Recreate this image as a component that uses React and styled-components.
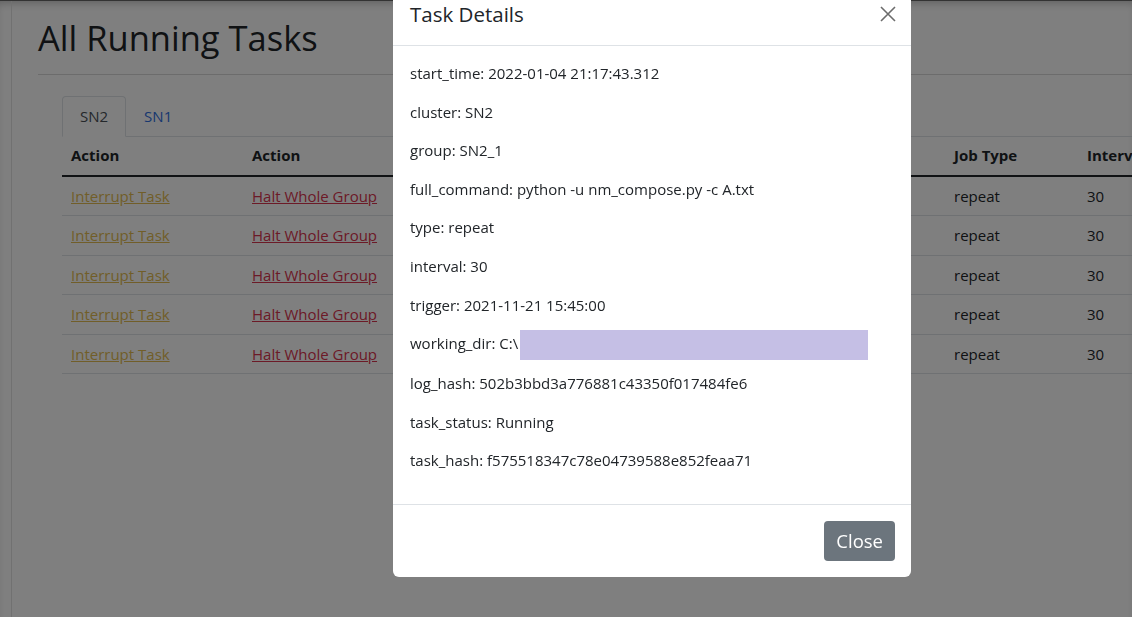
import React from "react";
import styled, { createGlobalStyle } from "styled-components";

const GlobalStyle = createGlobalStyle`
  html, body {
    margin: 0;
    padding: 0;
    overflow: hidden;
    background: #fff;
  }
  body {
    font-family: "Open Sans", "Noto Sans", sans-serif;
    font-size: 15px;
    color: #212529;
  }
`;

const Page = styled.div`
  display: flex;
  min-height: 617px;
  border-top: 1px solid #666;
  box-shadow: inset 0 6px 8px -4px rgba(0, 0, 0, 0.25);
`;

const Gutter = styled.div`
  flex: 0 0 11px;
`;

const Main = styled.main`
  flex: 1;
  border-left: 1px solid #e2e2e2;
  padding: 11px 0 0 26px;
  min-width: 1200px;
`;

const Title = styled.h1`
  margin: 0;
  font-size: 34.5px;
  line-height: 52px;
  font-weight: 400;
  color: #212529;
`;

const Rule = styled.hr`
  margin: 10px 0 21px;
  border: 0;
  border-top: 1px solid #d8d8d8;
`;

const Content = styled.div`
  padding-left: 24px;
`;

const Tabs = styled.ul`
  display: flex;
  list-style: none;
  margin: 0;
  padding: 0;
  border-bottom: 1px solid #dee2e6;
`;

const Tab = styled.li`
  margin-bottom: -1px;
  padding: 8px 17px;
  line-height: 23px;
  border: 1px solid ${(p) => (p.$active ? "#dee2e6" : "transparent")};
  border-bottom-color: ${(p) => (p.$active ? "#fff" : "transparent")};
  border-radius: 4px 4px 0 0;
  background: ${(p) => (p.$active ? "#fff" : "transparent")};
  color: ${(p) => (p.$active ? "#495057" : "#2f6fdf")};
`;

const Table = styled.table`
  border-collapse: collapse;
  table-layout: fixed;
  width: 1136px;
`;

const Th = styled.th`
  text-align: left;
  font-weight: 700;
  padding: 7px 9px 8px;
  line-height: 22.5px;
  border-bottom: 2px solid #212529;
  white-space: nowrap;
  overflow: hidden;
`;

const Td = styled.td`
  padding: 8px 9px;
  line-height: 22.5px;
  border-bottom: 1px solid #dee2e6;
  white-space: nowrap;
  overflow: hidden;
`;

const ActionLink = styled.a`
  color: ${(p) => (p.$tone === "danger" ? "#d9344e" : "#e3bc52")};
  text-decoration: underline;
  cursor: pointer;
`;

const Backdrop = styled.div`
  position: fixed;
  inset: 0;
  background: rgba(0, 0, 0, 0.5);
`;

const Modal = styled.div`
  position: fixed;
  left: 393px;
  top: -17px;
  width: 518px;
  background: #fff;
  border-radius: 6px;
  display: flex;
  flex-direction: column;
`;

const ModalHeader = styled.div`
  display: flex;
  align-items: center;
  justify-content: space-between;
  padding: 16px 15px 16px 17px;
  border-bottom: 1px solid #dee2e6;
`;

const ModalTitle = styled.h5`
  margin: 0;
  font-size: 20.5px;
  line-height: 30px;
  font-weight: 400;
`;

const CloseX = styled.button`
  border: 0;
  background: none;
  padding: 0;
  width: 16px;
  height: 16px;
  display: flex;
  color: #6c6c6c;
`;

const ModalBody = styled.div`
  padding: 16px 17px;
`;

const Field = styled.p`
  margin: 0 0 16px;
  line-height: 22.6px;
  white-space: nowrap;
`;

const Redacted = styled.span`
  display: inline-block;
  width: 348px;
  height: 30px;
  margin: -4px 0 -4px 2px;
  vertical-align: middle;
  background: #c5bfe5;
`;

const ModalFooter = styled.div`
  display: flex;
  justify-content: flex-end;
  padding: 16px;
  border-top: 1px solid #dee2e6;
`;

const Button = styled.button`
  height: 40px;
  padding: 0 12px;
  border: 0;
  border-radius: 4px;
  background: #6c757d;
  color: #fff;
  font-family: inherit;
  font-size: 18.5px;
`;

const rows = Array.from({ length: 5 }, (_, i) => ({
  name: `task_${i + 1}`,
  command: "python -u nm_compose.py -c A.txt",
  type: "repeat",
  interval: 30,
}));

const details = [
  ["start_time", "2022-01-04 21:17:43.312"],
  ["cluster", "SN2"],
  ["group", "SN2_1"],
  ["full_command", "python -u nm_compose.py -c A.txt"],
  ["type", "repeat"],
  ["interval", "30"],
  ["trigger", "2021-11-21 15:45:00"],
  ["working_dir", "C:\\", true],
  ["log_hash", "502b3bbd3a776881c43350f017484fe6"],
  ["task_status", "Running"],
  ["task_hash", "f575518347c78e04739588e852feaa71"],
];

export default function App() {
  return (
    <>
      <GlobalStyle />
      <Page>
        <Gutter />
        <Main>
          <Title>All Running Tasks</Title>
          <Rule />
          <Content>
            <Tabs>
              <Tab $active>SN2</Tab>
              <Tab>SN1</Tab>
            </Tabs>
            <Table>
              <colgroup>
                <col style={{ width: 181 }} />
                <col style={{ width: 200 }} />
                <col style={{ width: 120 }} />
                <col style={{ width: 382 }} />
                <col style={{ width: 133 }} />
                <col style={{ width: 120 }} />
              </colgroup>
              <thead>
                <tr>
                  <Th>Action</Th>
                  <Th>Action</Th>
                  <Th>Task Name</Th>
                  <Th>Command</Th>
                  <Th>Job Type</Th>
                  <Th>Interval</Th>
                </tr>
              </thead>
              <tbody>
                {rows.map((r) => (
                  <tr key={r.name}>
                    <Td>
                      <ActionLink>Interrupt Task</ActionLink>
                    </Td>
                    <Td>
                      <ActionLink $tone="danger">Halt Whole Group</ActionLink>
                    </Td>
                    <Td>{r.name}</Td>
                    <Td>{r.command}</Td>
                    <Td>{r.type}</Td>
                    <Td>{r.interval}</Td>
                  </tr>
                ))}
              </tbody>
            </Table>
          </Content>
        </Main>
      </Page>
      <Backdrop />
      <Modal>
        <ModalHeader>
          <ModalTitle>Task Details</ModalTitle>
          <CloseX aria-label="Close">
            <svg width="16" height="16" viewBox="0 0 16 16">
              <path d="M1 1L15 15M15 1L1 15" stroke="currentColor" strokeWidth="1.6" />
            </svg>
          </CloseX>
        </ModalHeader>
        <ModalBody>
          {details.map(([k, v, hidden]) => (
            <Field key={k}>
              {k}: {v}
              {hidden && <Redacted />}
            </Field>
          ))}
        </ModalBody>
        <ModalFooter>
          <Button>Close</Button>
        </ModalFooter>
      </Modal>
    </>
  );
}
